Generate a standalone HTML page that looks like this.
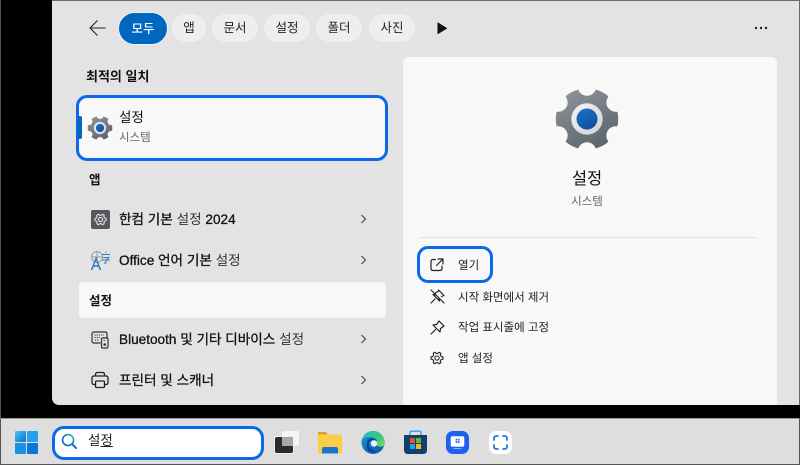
<!DOCTYPE html>
<html lang="ko"><head><meta charset="utf-8"><title>설정</title>
<style>
html,body{margin:0;padding:0;background:#000}
body{position:relative;width:800px;height:465px;overflow:hidden;font-family:"Liberation Sans","Noto Sans CJK KR",sans-serif;color:#1a1a1a;filter:blur(.3px)}
div,span,svg{position:absolute}
.t{line-height:20px;height:20px;white-space:nowrap}
.chip{top:14px;height:28px;line-height:29px;border-radius:14px;background:#eeeeee;text-align:center;font-size:12.5px;color:#222}
.row{font-size:13.6px;font-weight:400;color:#111;-webkit-text-stroke:.3px #111}
.l{font-weight:400;color:#333;-webkit-text-stroke:0}
.act{font-size:11.5px;left:458px;color:#222}
.chev{left:360px;width:7px;height:10px}
.ic{fill:none;stroke:#222;stroke-width:1.2;stroke-linecap:round;stroke-linejoin:round}
</style></head><body>
<svg width="0" height="0" style="left:0;top:0"><defs>
<linearGradient id="g1" x1="0.2" y1="0" x2="0.8" y2="1"><stop offset="0" stop-color="#8c9298"/><stop offset="1" stop-color="#5a626b"/></linearGradient>
<linearGradient id="g2" x1="0.2" y1="0" x2="0.8" y2="1"><stop offset="0" stop-color="#1a70c4"/><stop offset="1" stop-color="#0c4f9f"/></linearGradient>
<linearGradient id="g3" x1="0" y1="0" x2="1" y2="1"><stop offset="0" stop-color="#f4f4f4"/><stop offset="1" stop-color="#d0d2d4"/></linearGradient>
<linearGradient id="w1" x1="0" y1="0" x2="1" y2="1"><stop offset="0" stop-color="#4cc8f8"/><stop offset="1" stop-color="#0670cc"/></linearGradient>
<symbol id="gear" viewBox="-33 -33 66 66">
<path fill="url(#g1)" stroke="url(#g1)" stroke-width="1.4" stroke-linejoin="round" d="M29.800 -6.600A31 31 0 0 1 29.800 6.600A10 10 0 0 0 20.600 22.500A31 31 0 0 1 9.200 28.600A10 10 0 0 0 -9.200 28.600A31 31 0 0 1 -20.600 22.500A10 10 0 0 0 -29.800 6.600A31 31 0 0 1 -29.800 -6.600A10 10 0 0 0 -20.600 -22.500A31 31 0 0 1 -9.200 -28.600A10 10 0 0 0 9.200 -28.600A31 31 0 0 1 20.600 -22.500A10 10 0 0 0 29.800 -6.600Z"/>
<circle r="15.700" fill="url(#g3)"/><circle r="10.500" fill="url(#g2)"/>
</symbol>
<symbol id="cv" viewBox="0 0 7 10"><path d="M1.500 1L5.500 5L1.500 9" fill="none" stroke="#444" stroke-width="1.100"/></symbol>
</defs></svg>

<!-- panel -->
<div style="left:52px;top:0;width:748px;height:405px;background:#e3e3e3;border-bottom-left-radius:7px;border-top:1px solid #6a6a6a;box-sizing:border-box;border-right:1px solid #6a6a6a"></div>
<div style="left:0;top:0;width:1px;height:418px;background:#555"></div>

<!-- header -->
<svg style="left:88px;top:18px" width="20" height="20" viewBox="0 0 20 20"><path d="M17.500 10H2M9.500 2.500L2 10L9.500 17.500" fill="none" stroke="#222" stroke-width="1.100"/></svg>
<div class="chip" style="left:118px;top:12px;width:50px;height:33px;line-height:32px;border-radius:17px;background:#0067c0;color:#fff;box-sizing:border-box;border:1px solid #f2f2f2;font-weight:500">모두</div>
<div class="chip" style="left:172px;width:34px">앱</div>
<div class="chip" style="left:212px;width:46px">문서</div>
<div class="chip" style="left:264px;width:46px">설정</div>
<div class="chip" style="left:316px;width:46px">폴더</div>
<div class="chip" style="left:369px;width:46px">사진</div>
<svg style="left:437px;top:22px" width="11" height="13" viewBox="0 0 11 13"><path d="M1 1L9.500 6.300L1 11.500Z" fill="#111" stroke="#111" stroke-linejoin="round"/></svg>
<svg style="left:754px;top:26px" width="14" height="4" viewBox="0 0 14 4"><circle cx="2" cy="2" r="1.200" fill="#222"/><circle cx="7" cy="2" r="1.200" fill="#222"/><circle cx="12" cy="2" r="1.200" fill="#222"/></svg>

<!-- left column -->
<div class="t" style="left:86px;top:67px;font-size:13px;font-weight:700;color:#111">최적의 일치</div>
<div style="left:76px;top:95px;width:312px;height:66px;box-sizing:border-box;border:3px solid #0a6ae6;border-radius:11px;background:#f8f8f8"></div>
<div style="left:78px;top:116px;width:3.500px;height:23px;background:#0067c0;border-radius:2px"></div>
<svg style="left:87px;top:115px" width="26" height="26"><use href="#gear" width="26" height="26"/></svg>
<div class="t" style="left:119px;top:108px;font-size:13.500px;color:#111">설정</div>
<div class="t" style="left:119px;top:128px;font-size:11.500px;color:#666">시스템</div>

<div class="t" style="left:89px;top:170px;font-size:12.500px;font-weight:700;color:#111">앱</div>

<div style="left:91px;top:210px;width:19px;height:19px;background:#55585c;border-radius:2px"></div>
<svg style="left:93px;top:212px" width="15" height="15" viewBox="-33 -33 66 66"><path fill="none" stroke="#e4e4e4" stroke-width="5" d="M24 -5A20 20 0 0 1 24 5A9 9 0 0 0 16 18A20 20 0 0 1 8 23A9 9 0 0 0 -8 23A20 20 0 0 1 -16 18A9 9 0 0 0 -24 5A20 20 0 0 1 -24 -5A9 9 0 0 0 -16 -18A20 20 0 0 1 -8 -23A9 9 0 0 0 8 -23A20 20 0 0 1 16 -18A9 9 0 0 0 24 -5Z"/><circle r="9" fill="none" stroke="#e4e4e4" stroke-width="5"/></svg>
<div class="t row" style="left:119px;top:210px">한컴 기본 <span class="l" style="position:static">설정</span> 2024</div>
<svg class="chev" style="top:214px"><use href="#cv" width="7" height="10"/></svg>

<svg style="left:90px;top:250px" width="21" height="21" viewBox="0 0 21 21">
<circle cx="7" cy="7" r="5.500" fill="none" stroke="#9a9ea2"/><path d="M1.500 7H12.500M7 1.500V12" stroke="#9a9ea2" fill="none"/>
<path d="M1.500 20L6 8.500L10.500 20M3 16H9" fill="none" stroke="#2f78c4" stroke-width="1.500"/>
<path d="M12 4.500H20M16 1.500V3M13 7.500H19L16 10V13H14M12 10H20" fill="none" stroke="#2f78c4" stroke-width="0.900"/></svg>
<div class="t row" style="left:119px;top:251px">Office 언어 기본 <span class="l" style="position:static">설정</span></div>
<svg class="chev" style="top:255px"><use href="#cv" width="7" height="10"/></svg>

<div style="left:79px;top:282px;width:307px;height:36px;background:#f8f8f8;border-radius:4px"></div>
<div class="t" style="left:89px;top:291px;font-size:12.500px;font-weight:700;color:#111">설정</div>

<svg style="left:91px;top:331px" width="18" height="18" viewBox="0 0 18 18"><path class="ic" d="M9 12H3Q1 12 1 10V3Q1 1 3 1H14Q16 1 16 3V6" style="stroke:#333"/><rect class="ic" x="10.500" y="7" width="6.500" height="10" rx="1.200" style="stroke:#333"/><circle cx="13.700" cy="13.500" r="1.300" fill="#333"/><path d="M3.500 4H13M3.500 6.500H9M4 9H8M12.500 9.500H15" stroke="#333" stroke-dasharray="1.200 1" fill="none"/></svg>
<div class="t row" style="left:119px;top:330px">Bluetooth 및 기타 디바이스 <span class="l" style="position:static">설정</span></div>
<svg class="chev" style="top:334px"><use href="#cv" width="7" height="10"/></svg>

<svg style="left:91px;top:371px" width="18" height="18" viewBox="0 0 18 18"><path d="M4.500 5V3.500Q4.500 1.500 6.500 1.500H11.500Q13.500 1.500 13.500 3.500V5M4.500 13.500H3Q1 13.500 1 11.500V7Q1 5 3 5H15Q17 5 17 7V11.500Q17 13.500 15 13.500H13.500" fill="none" stroke="#222" stroke-width="1.300"/><rect x="4.500" y="10" width="9" height="6.500" rx="1.300" fill="none" stroke="#222" stroke-width="1.300"/></svg>
<div class="t row" style="left:119px;top:371px">프린터 및 스캐너</div>
<svg class="chev" style="top:375px"><use href="#cv" width="7" height="10"/></svg>

<!-- right card -->
<div style="left:403px;top:57px;width:374px;height:348px;background:#f8f8f8;border-radius:6px 6px 0 0"></div>
<svg style="left:554px;top:86px" width="66" height="66"><use href="#gear" width="66" height="66"/></svg>
<div class="t" style="left:403px;width:368px;text-align:center;top:169px;font-size:16.500px;color:#111">설정</div>
<div class="t" style="left:403px;width:368px;text-align:center;top:192px;font-size:11.500px;color:#666">시스템</div>
<div style="left:419px;top:237px;width:338px;height:1px;background:#e2e2e2"></div>

<div style="left:417px;top:246px;width:76px;height:37px;box-sizing:border-box;border:3px solid #0a6ae6;border-radius:11px"></div>
<svg style="left:430px;top:258px" width="14" height="14" viewBox="0 0 14 14"><path class="ic" d="M5.500 1.500H3Q1 1.500 1 3.500V10.500Q1 12.500 3 12.500H10Q12 12.500 12 10.500V8M8 1H13V6M13 1L6.500 7.500"/></svg>
<div class="t act" style="top:256px">열기</div>

<svg style="left:430px;top:289px" width="15" height="15" viewBox="0 0 15 15"><path class="ic" d="M1 1L14 14M8.500 1L14 6.500L11.500 7.500M5.500 4L9 1.500M3 5.500L9.500 12L9 9.500M5 10L1 14M3 5.500L5.500 6"/></svg>
<div class="t act" style="top:288px">시작 화면에서 제거</div>

<svg style="left:430px;top:320px" width="15" height="15" viewBox="0 0 15 15"><path class="ic" d="M9 1L14 6L10.500 8.500L10 12L3 5L6.500 4.500ZM5.500 9.500L1 14"/></svg>
<div class="t act" style="top:318px">작업 표시줄에 고정</div>

<svg style="left:430px;top:351px" width="14" height="14" viewBox="-33 -33 66 66"><path fill="none" stroke="#222" stroke-width="5" d="M28 -6A29 29 0 0 1 28 6A10 10 0 0 0 18 22A29 29 0 0 1 9 27A10 10 0 0 0 -9 27A29 29 0 0 1 -18 22A10 10 0 0 0 -28 6A29 29 0 0 1 -28 -6A10 10 0 0 0 -18 -22A29 29 0 0 1 -9 -27A10 10 0 0 0 9 -27A29 29 0 0 1 18 -22A10 10 0 0 0 28 -6Z"/><circle r="10" fill="none" stroke="#222" stroke-width="5"/></svg>
<div class="t act" style="top:349px">앱 설정</div>

<!-- taskbar -->
<div style="left:0;top:418px;width:800px;height:47px;background:#dedede;border-top:1px solid #9a9a9a;border-bottom:1px solid #555;box-sizing:border-box;border-left:1px solid #555;border-right:1px solid #555"></div>
<svg style="left:15px;top:431px" width="23" height="23" viewBox="0 0 23 23"><rect x="0" y="0" width="11" height="11" rx="1" fill="url(#w1)"/><rect x="12" y="0" width="11" height="11" rx="1" fill="#2a9fea"/><rect x="0" y="12" width="11" height="11" rx="1" fill="#1a8fe4"/><rect x="12" y="12" width="11" height="11" rx="1" fill="#0a78d6"/></svg>

<div style="left:52px;top:426px;width:212px;height:34px;box-sizing:border-box;border:3px solid #0a6ae6;border-radius:12px;background:#fff"></div>
<svg style="left:61px;top:433px" width="17" height="17" viewBox="0 0 18 18"><defs><linearGradient id="s1" x1="0" y1="1" x2="1" y2="0"><stop offset="0" stop-color="#0a5cb8"/><stop offset="0.600" stop-color="#0a80c8"/><stop offset="1" stop-color="#3cc8a0"/></linearGradient></defs><circle cx="7.500" cy="7.500" r="5.800" fill="none" stroke="url(#s1)" stroke-width="1.700"/><path d="M11.800 11.800L16 16" stroke="#0a5cb8" stroke-width="1.900" stroke-linecap="round"/></svg>
<div class="t" style="left:88px;top:431px;font-size:13.500px;color:#222">설<span style="position:static;text-decoration:underline">정</span></div>

<!-- task view -->
<div style="left:282px;top:431px;width:17px;height:15px;background:#f5f5f5;border-radius:2px"></div>
<div style="left:275px;top:437px;width:18px;height:16px;background:#2b2b2b;border-radius:2px;box-shadow:0 0 0 1px #eee"></div>
<div style="left:282px;top:437px;width:11px;height:9px;background:#a8a8a8"></div>

<!-- explorer -->
<svg style="left:318px;top:431px" width="24" height="23" viewBox="0 0 24 23"><path d="M0 2Q0 1 1 1H8L10 3.500H3V6H0Z" fill="#d9a21f"/><rect x="0" y="3.500" width="24" height="19" rx="1.500" fill="#f9cf4a"/><path d="M4 22.500V18Q4 16 6 16H18Q20 16 20 18V22.500Z" fill="#1a76cc"/></svg>

<!-- edge -->
<svg style="left:361px;top:431px" width="24" height="23" viewBox="0 0 24 23"><defs><linearGradient id="e1" x1="0" y1="0" x2="1" y2="1"><stop offset="0" stop-color="#2ab8d8"/><stop offset="0.600" stop-color="#3ac878"/><stop offset="1" stop-color="#88dc50"/></linearGradient><linearGradient id="e2" x1="0" y1="0" x2="1" y2="1"><stop offset="0" stop-color="#1a9ad8"/><stop offset="1" stop-color="#0c4fa8"/></linearGradient></defs><circle cx="12" cy="11.500" r="11.500" fill="url(#e2)"/><path d="M1 9C3 2 9 0 12 0C19 0 24 6 24 12C24 15 21 16 18 15.500C14 15 15 11 16 10C14 6 6 4 1 9Z" fill="url(#e1)"/><path d="M16 10.500C14 8 9 8 8 12C7 16 11 20 16 20C13 22 9 21 8 20C5 18 5 12 7 9C10 6 15 7 16 10.500Z" fill="#0b3f94"/><circle cx="13" cy="12.500" r="3.200" fill="#e8f4f8"/></svg>

<!-- store -->
<svg style="left:404px;top:430px" width="23" height="24" viewBox="0 0 23 24"><path d="M6 6V3Q6 1.200 8 1.200H15Q17 1.200 17 3V6" fill="none" stroke="#2aa8e8" stroke-width="1.400"/><path d="M0 5H23V20Q23 24 19 24H4Q0 24 0 20Z" fill="#123f6e"/><rect x="6" y="8" width="5" height="5" fill="#e8532a"/><rect x="12" y="8" width="5" height="5" fill="#6cb82c"/><rect x="6" y="14" width="5" height="5" fill="#20a4e8"/><rect x="12" y="14" width="5" height="5" fill="#f4b81c"/></svg>

<!-- blue app -->
<div style="left:446px;top:431px;width:23px;height:23px;background:#1d5ff0;border-radius:7px"></div>
<svg style="left:450px;top:436px" width="15" height="13" viewBox="0 0 15 13"><path d="M1 2Q1 0.500 2.500 0.500H12.500Q14 0.500 14 2V9Q14 10.500 12.500 10.500H2.500Q1 10.500 1 9ZM3.500 12.500H11.500" fill="#fff" stroke="#fff" stroke-width="0.600"/><g fill="#1d5ff0"><rect x="5.600" y="2.800" width="1.700" height="1.700"/><rect x="7.900" y="2.800" width="1.700" height="1.700"/><rect x="5.600" y="5.200" width="1.700" height="1.700"/><rect x="7.900" y="5.200" width="1.700" height="1.700"/></g></svg>

<!-- white app -->
<div style="left:489px;top:431px;width:23px;height:23px;background:#fff;border-radius:7px"></div>
<svg style="left:493px;top:435px" width="15" height="15" viewBox="0 0 15 15"><path d="M1 5V3.500Q1 1 3.500 1H5M10 1H11.500Q14 1 14 3.500V5M14 10V11.500Q14 14 11.500 14H10M5 14H3.500Q1 14 1 11.500V10" fill="none" stroke="#1d7ae0" stroke-width="1.800" stroke-linecap="round"/></svg>
</body></html>
